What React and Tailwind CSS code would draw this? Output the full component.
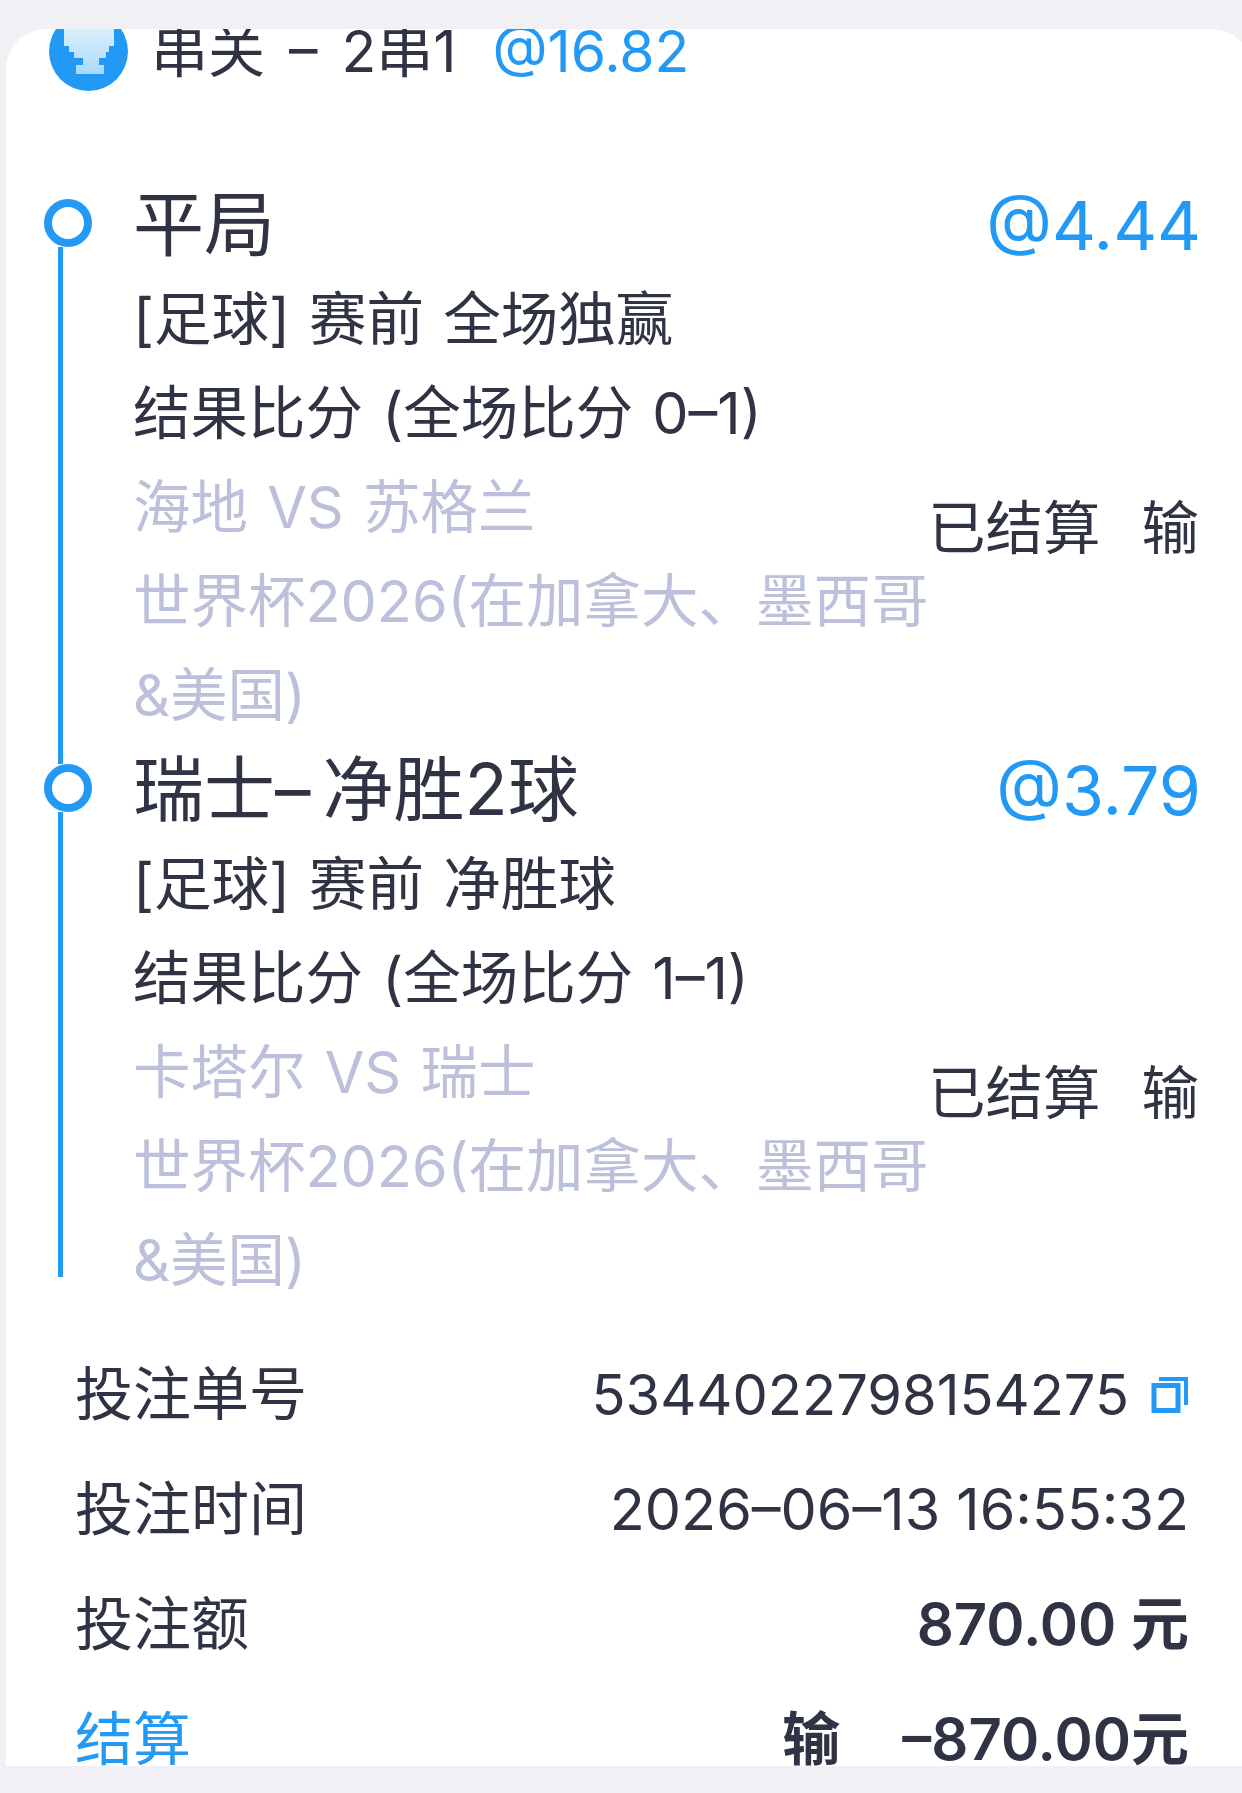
const font = { fontFamily: '"Inter","Noto Sans CJK SC",sans-serif' };

function Cup() {
  return (
    <svg viewBox="0 0 79 79" className="w-[79px] h-[79px] shrink-0">
      <defs>
        <linearGradient id="cup" x1="0" y1="0" x2="0" y2="1">
          <stop offset="0.2" stopColor="#d9eefd" />
          <stop offset="1" stopColor="#a9d8fb" />
        </linearGradient>
      </defs>
      <circle cx="39.5" cy="39.5" r="39.5" fill="#2299f5" />
      <path d="M15 10H65V34H60V40H57V46H50V53H55V62H27V53H34V46H25V40H20V34H15Z" fill="url(#cup)" />
    </svg>
  );
}

function Copy() {
  return (
    <svg viewBox="0 0 38 38" className="w-[38px] h-[38px]" fill="none" stroke="#2299f5">
      <path d="M8 3H35V29" strokeWidth="4" />
      <rect x="3" y="9.5" width="24" height="25" strokeWidth="5" fill="#fff" />
    </svg>
  );
}

function Leg({ first, title, odds, line2, line3, teams }) {
  return (
    <div className="flex">
      <div className="w-[127px] shrink-0 flex flex-col">
        <div className={`w-[5px] h-[22px] ml-[52px] ${first ? "" : "bg-[#2299f5]"}`} />
        <div className="w-[48px] h-[48px] ml-[38px] rounded-full border-[8px] border-[#2299f5] bg-white shrink-0" />
        <div className={`w-[5px] flex-1 ml-[52px] bg-[#2299f5] ${first ? "" : "mb-[30px]"}`} />
      </div>
      <div className="flex-1 mr-[51px] min-w-0">
        <div className="flex justify-between items-center h-[95px]">
          <span className="text-[71px] text-[#2f3344]">{title}</span>
          <span className="text-[68px] text-[#2299f5]">{odds}</span>
        </div>
        <div className="flex justify-between items-center">
          <div className="w-[795px] text-[57.5px] leading-[94px] text-[#2f3344] [word-spacing:3px] whitespace-nowrap">
            <div>{line2}</div>
            <div>{line3}</div>
            <div className="text-[#bcc0da]">{teams}</div>
            <div className="text-[#bcc0da]">世界杯2026(在加拿大、墨西哥<br />&amp;美国)</div>
          </div>
          <div className="flex-1 flex justify-between text-[57.5px] text-[#2f3344] mt-[43px] pr-[2px]">
            <span>已结算</span>
            <span>输</span>
          </div>
        </div>
      </div>
    </div>
  );
}

function Row({ label, children, blue }) {
  return (
    <div className="flex justify-between items-center h-[115px] text-[56px] text-[#2f3344]">
      <span className={`text-[58px] ${blue ? "text-[#2299f5]" : ""}`}>{label}</span>
      {children}
    </div>
  );
}

export default function App() {
  return (
    <div className="h-[1793px] bg-[#f1f1f5] pt-[29px] pl-[6px] overflow-hidden" style={font}>
      <div className="w-[1246px] h-[1737px] bg-white rounded-t-[40px] overflow-hidden">
        <div className="flex items-center h-[79px] -mt-[17px] ml-[43px] text-[57px] text-[#2f3344]">
          <Cup />
          <span className="ml-[23px] whitespace-pre [word-spacing:8px]">串关 – 2串1</span>
          <span className="ml-[36px] text-[#2299f5]">@16.82</span>
        </div>
        <div className="mt-[86px]">
          <Leg first title="平局" odds="@4.44" line2="[足球] 赛前 全场独赢" line3="结果比分 (全场比分 0–1)" teams="海地 VS 苏格兰" />
          <Leg
            title={<>瑞士–<span className="ml-[12px]">净胜2球</span></>}
            odds="@3.79"
            line2="[足球] 赛前 净胜球"
            line3="结果比分 (全场比分 1–1)"
            teams="卡塔尔 VS 瑞士"
          />
        </div>
        <div className="ml-[69px] mr-[63px] mt-[30px]">
          <Row label="投注单号">
            <span className="flex items-center gap-[22px]">5344022798154275<Copy /></span>
          </Row>
          <Row label="投注时间"><span className="text-[57.5px]">2026–06–13 16:55:32</span></Row>
          <Row label="投注额"><span className="font-semibold text-[58px]">870.00 元</span></Row>
          <Row label="结算" blue>
            <span className="flex gap-[62px] font-semibold text-[58px]">
              <span>输</span>
              <span>–870.00元</span>
            </span>
          </Row>
        </div>
      </div>
    </div>
  );
}
